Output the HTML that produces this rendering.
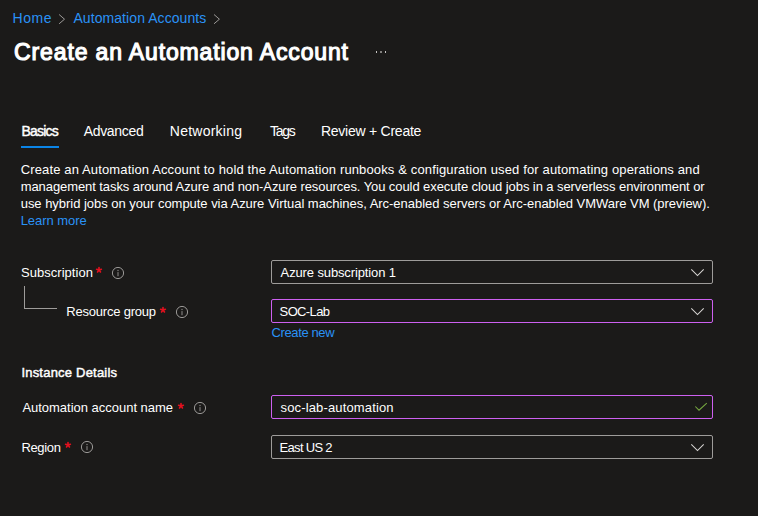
<!DOCTYPE html>
<html><head><meta charset="utf-8"><title>Create an Automation Account</title><style>
*{margin:0;padding:0;box-sizing:border-box}
html,body{width:758px;height:516px;overflow:hidden;background:#1b1a19}
body{position:relative;font-family:"Liberation Sans",sans-serif}
.t{position:absolute;white-space:nowrap}
.ic{position:absolute;display:block}
.box{position:absolute;left:271px;width:442px;height:24px;border:1px solid #9e9c9a;border-radius:2px}
.line{position:absolute;background:#9e9c9a}
</style></head><body>
<div class="t" id="home" style="left:12.50px;top:11.15px;font-size:14px;line-height:14px;letter-spacing:0.533px;color:#2a92f6;font-weight:400">Home</div>
<div class="t" id="aa" style="left:73.40px;top:11.15px;font-size:14px;line-height:14px;letter-spacing:0.078px;color:#2a92f6;font-weight:400">Automation Accounts</div>
<div class="t" id="title" style="left:14.10px;top:40.53px;font-size:23px;line-height:23px;letter-spacing:0.859px;color:#ffffff;font-weight:400;-webkit-text-stroke:1.15px #ffffff">Create an Automation Account</div>
<div class="t" id="tb1" style="left:21.50px;top:124.15px;font-size:14px;line-height:14px;letter-spacing:-0.800px;color:#ffffff;font-weight:400;-webkit-text-stroke:0.45px #ffffff">Basics</div>
<div class="t" id="tb2" style="left:83.70px;top:124.15px;font-size:14px;line-height:14px;letter-spacing:-0.314px;color:#ffffff;font-weight:400">Advanced</div>
<div class="t" id="tb3" style="left:169.80px;top:124.15px;font-size:14px;line-height:14px;letter-spacing:0.244px;color:#ffffff;font-weight:400">Networking</div>
<div class="t" id="tb4" style="left:270.10px;top:124.15px;font-size:14px;line-height:14px;letter-spacing:-1.267px;color:#ffffff;font-weight:400">Tags</div>
<div class="t" id="tb5" style="left:320.90px;top:124.15px;font-size:14px;line-height:14px;letter-spacing:-0.243px;color:#ffffff;font-weight:400">Review + Create</div>
<div class="t" id="p1" style="left:20.70px;top:163.00px;font-size:13px;line-height:13px;letter-spacing:0.135px;color:#ffffff;font-weight:400">Create an Automation Account to hold the Automation runbooks &amp; configuration used for automating operations and</div>
<div class="t" id="p2" style="left:20.70px;top:180.00px;font-size:13px;line-height:13px;letter-spacing:-0.080px;color:#ffffff;font-weight:400">management tasks around Azure and non-Azure resources. You could execute cloud jobs in a serverless environment or</div>
<div class="t" id="p3" style="left:20.70px;top:197.00px;font-size:13px;line-height:13px;letter-spacing:-0.033px;color:#ffffff;font-weight:400">use hybrid jobs on your compute via Azure Virtual machines, Arc-enabled servers or Arc-enabled VMWare VM (preview).</div>
<div class="t" id="p4" style="left:20.70px;top:214.00px;font-size:13px;line-height:13px;letter-spacing:-0.044px;color:#2a92f6;font-weight:400">Learn more</div>
<div class="t" id="l1" style="left:21.00px;top:266.00px;font-size:13px;line-height:13px;letter-spacing:0.036px;color:#ffffff;font-weight:400">Subscription</div>
<div class="t" id="l2" style="left:66.20px;top:305.00px;font-size:13px;line-height:13px;letter-spacing:-0.200px;color:#ffffff;font-weight:400">Resource group</div>
<div class="t" id="h2" style="left:21.40px;top:366.00px;font-size:13px;line-height:13px;letter-spacing:0.213px;color:#ffffff;font-weight:400;-webkit-text-stroke:0.45px #ffffff">Instance Details</div>
<div class="t" id="l3" style="left:22.40px;top:401.00px;font-size:13px;line-height:13px;letter-spacing:-0.018px;color:#ffffff;font-weight:400">Automation account name</div>
<div class="t" id="l4" style="left:21.40px;top:441.00px;font-size:13px;line-height:13px;letter-spacing:-0.320px;color:#ffffff;font-weight:400">Region</div>
<div class="t" id="v1" style="left:280.60px;top:266.00px;font-size:13px;line-height:13px;letter-spacing:-0.126px;color:#ffffff;font-weight:400">Azure subscription 1</div>
<div class="t" id="v2" style="left:279.60px;top:305.00px;font-size:13px;line-height:13px;letter-spacing:-0.633px;color:#ffffff;font-weight:400">SOC-Lab</div>
<div class="t" id="cn" style="left:271.50px;top:326.00px;font-size:13px;line-height:13px;letter-spacing:-0.378px;color:#2a92f6;font-weight:400">Create new</div>
<div class="t" id="v3" style="left:280.60px;top:401.00px;font-size:13px;line-height:13px;letter-spacing:0.141px;color:#ffffff;font-weight:400">soc-lab-automation</div>
<div class="t" id="v4" style="left:279.60px;top:441.00px;font-size:13px;line-height:13px;letter-spacing:-0.700px;color:#ffffff;font-weight:400">East US 2</div>
<svg class="ic" style="left:50px;top:10px" width="20" height="20" viewBox="0 0 20 20"><path d="M9.1 4.5 L14.5 9.2 L9.1 13.8" fill="none" stroke="#a19f9d" stroke-width="0.95"/></svg>
<svg class="ic" style="left:205px;top:10px" width="20" height="20" viewBox="0 0 20 20"><path d="M9 4.5 L14.4 9.2 L9 13.8" fill="none" stroke="#a19f9d" stroke-width="0.95"/></svg>
<div style="position:absolute;left:376px;top:51px;width:1px;height:2px;background:#c8c6c4"></div>
<div style="position:absolute;left:380px;top:51px;width:2px;height:2px;background:#82807e"></div>
<div style="position:absolute;left:385px;top:51px;width:1px;height:2px;background:#c8c6c4"></div>
<div style="position:absolute;left:21px;top:146px;width:38px;height:2px;background:#0b84e6"></div>
<svg class="ic" style="left:92px;top:263.2px" width="14" height="14" viewBox="0 0 14 14"><path d="M7 7 L7.00 4.50 M7 7 L9.38 6.23 M7 7 L8.47 9.02 M7 7 L5.53 9.02 M7 7 L4.62 6.23 " stroke="#e3101e" stroke-width="1.6" stroke-linecap="round" fill="none"/></svg>
<svg class="ic" style="left:156px;top:303.2px" width="14" height="14" viewBox="0 0 14 14"><path d="M7 7 L7.00 4.50 M7 7 L9.38 6.23 M7 7 L8.47 9.02 M7 7 L5.53 9.02 M7 7 L4.62 6.23 " stroke="#e3101e" stroke-width="1.6" stroke-linecap="round" fill="none"/></svg>
<svg class="ic" style="left:174px;top:399px" width="14" height="14" viewBox="0 0 14 14"><path d="M7 7 L7.00 4.50 M7 7 L9.38 6.23 M7 7 L8.47 9.02 M7 7 L5.53 9.02 M7 7 L4.62 6.23 " stroke="#e3101e" stroke-width="1.6" stroke-linecap="round" fill="none"/></svg>
<svg class="ic" style="left:60.900000000000006px;top:438.2px" width="14" height="14" viewBox="0 0 14 14"><path d="M7 7 L7.00 4.50 M7 7 L9.38 6.23 M7 7 L8.47 9.02 M7 7 L5.53 9.02 M7 7 L4.62 6.23 " stroke="#e3101e" stroke-width="1.6" stroke-linecap="round" fill="none"/></svg>
<svg class="ic" style="left:111px;top:266px" width="14" height="14" viewBox="0 0 14 14"><circle cx="7" cy="7" r="5.6" fill="none" stroke="#9a9896" stroke-width="1"/><circle cx="7" cy="4.5" r="0.7" fill="#8a8886"/><rect x="6.45" y="6.1" width="1.1" height="4.1" fill="#858381"/></svg>
<svg class="ic" style="left:175px;top:304.5px" width="14" height="14" viewBox="0 0 14 14"><circle cx="7" cy="7" r="5.6" fill="none" stroke="#9a9896" stroke-width="1"/><circle cx="7" cy="4.5" r="0.7" fill="#8a8886"/><rect x="6.45" y="6.1" width="1.1" height="4.1" fill="#858381"/></svg>
<svg class="ic" style="left:192.7px;top:401px" width="14" height="14" viewBox="0 0 14 14"><circle cx="7" cy="7" r="5.6" fill="none" stroke="#9a9896" stroke-width="1"/><circle cx="7" cy="4.5" r="0.7" fill="#8a8886"/><rect x="6.45" y="6.1" width="1.1" height="4.1" fill="#858381"/></svg>
<svg class="ic" style="left:79.8px;top:439.5px" width="14" height="14" viewBox="0 0 14 14"><circle cx="7" cy="7" r="5.6" fill="none" stroke="#9a9896" stroke-width="1"/><circle cx="7" cy="4.5" r="0.7" fill="#8a8886"/><rect x="6.45" y="6.1" width="1.1" height="4.1" fill="#858381"/></svg>
<div class="line" style="left:24px;top:286px;width:1px;height:23px"></div>
<div class="line" style="left:24px;top:308px;width:33px;height:1px"></div>
<div class="box" style="top:260px;border-color:#9e9c9a"></div><svg class="ic" style="left:688px;top:264px" width="20" height="16" viewBox="0 0 20 16"><path d="M3.3 5.3 L9.5 11.5 L15.7 5.3" fill="none" stroke="#d6d4d2" stroke-width="1.05"/></svg>
<div class="box" style="top:299px;border-color:#cd60f0"></div><svg class="ic" style="left:688px;top:303px" width="20" height="16" viewBox="0 0 20 16"><path d="M3.3 5.3 L9.5 11.5 L15.7 5.3" fill="none" stroke="#d6d4d2" stroke-width="1.05"/></svg>
<div class="box" style="top:395px;border-color:#cd60f0"></div><svg class="ic" style="left:690px;top:399px" width="20" height="16" viewBox="0 0 20 16"><path d="M5.3 7.5 L9 11.2 L16.8 4.1" fill="none" stroke="#76a840" stroke-width="1.05"/></svg>
<div class="box" style="top:435px;border-color:#9e9c9a"></div><svg class="ic" style="left:688px;top:439px" width="20" height="16" viewBox="0 0 20 16"><path d="M3.3 5.3 L9.5 11.5 L15.7 5.3" fill="none" stroke="#d6d4d2" stroke-width="1.05"/></svg>
</body></html>
